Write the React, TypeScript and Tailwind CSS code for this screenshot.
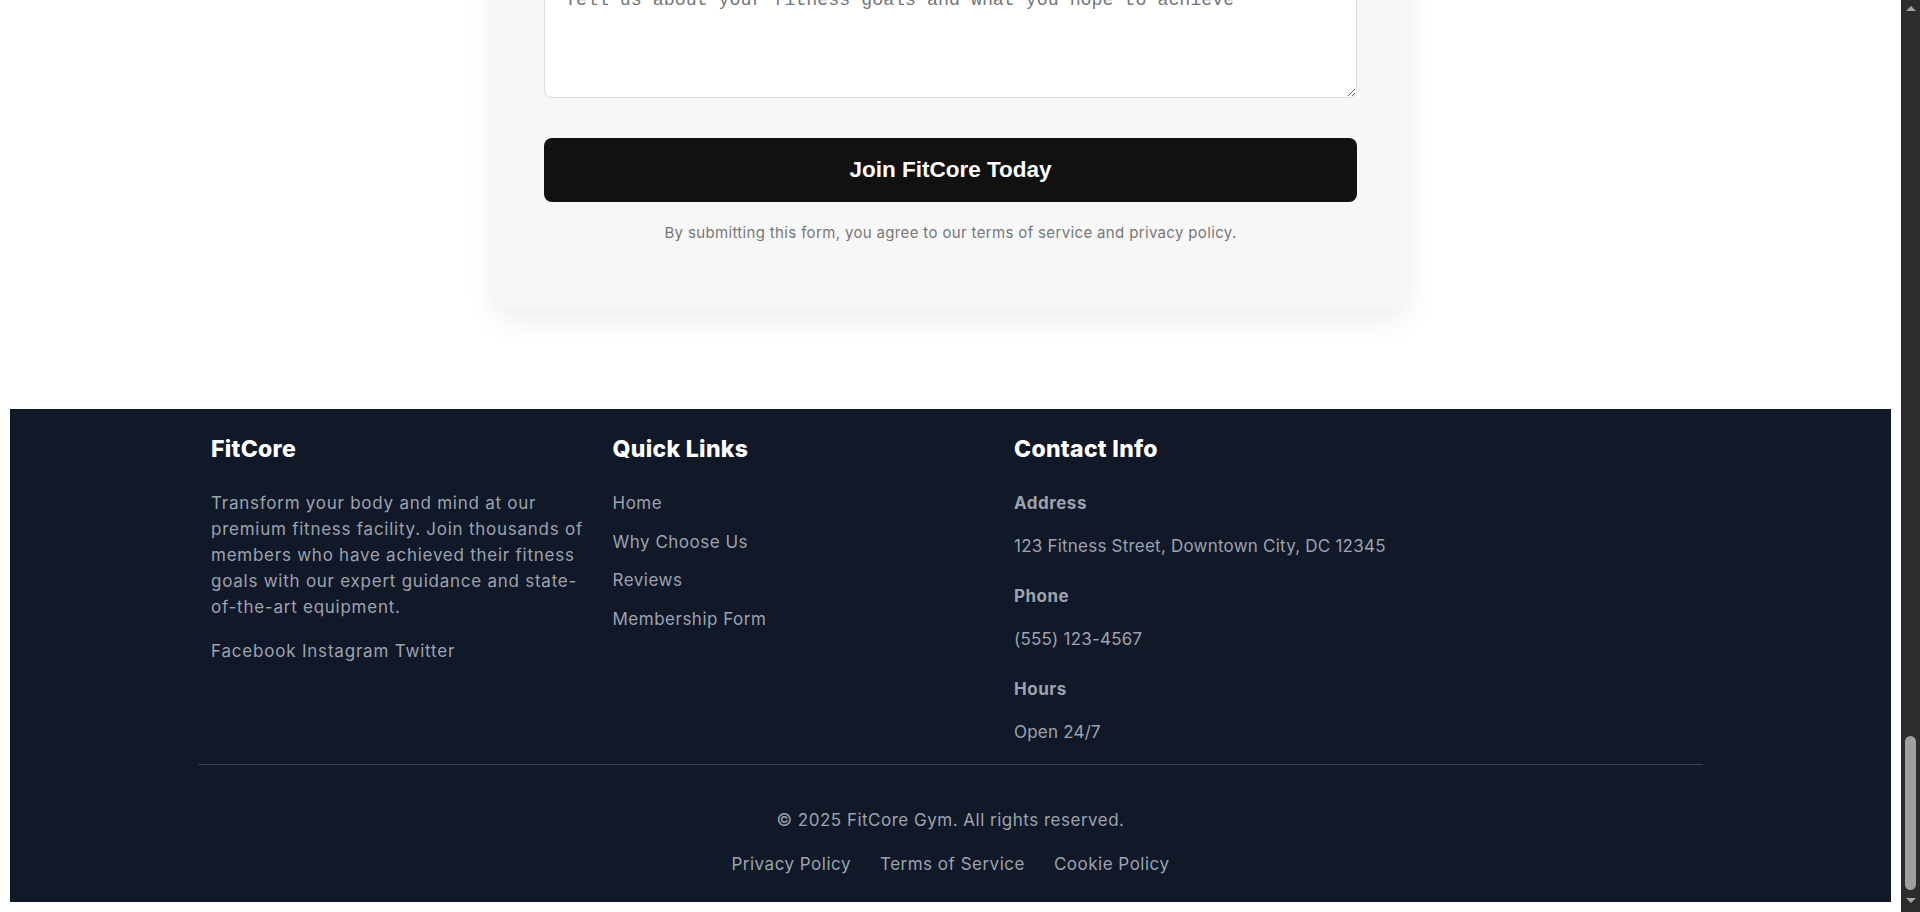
const QUICK_LINKS = ["Home", "Why Choose Us", "Reviews", "Membership Form"];

const CONTACT = [
  ["Address", "123 Fitness Street, Downtown City, DC 12345"],
  ["Phone", "(555) 123-4567"],
  ["Hours", "Open 24/7"],
];

function Scrollbar() {
  return (
    <div className="flex w-[19px] shrink-0 flex-col items-center bg-[#2c2c2c]">
      <div className="mt-[6px] h-0 w-0 border-x-[5px] border-b-[5px] border-x-transparent border-b-[#a3a3a3]" />
      <div className="mt-auto h-[154px] w-[11px] rounded-full bg-[#9f9f9f]" />
      <div className="mb-[9px] mt-[8px] h-0 w-0 border-x-[5px] border-t-[5px] border-x-transparent border-t-[#a3a3a3]" />
    </div>
  );
}

export default function App() {
  return (
    <div className="flex h-[912px] w-full overflow-hidden bg-white font-['Inter',sans-serif]">
      <div className="flex min-w-0 flex-1 flex-col">
        {/* Membership form, scrolled past its top */}
        <section className="flex justify-center">
          <div className="-mt-[80px] w-[913px] rounded-2xl bg-[#f7f7f7] px-[50px] pb-[66px] pt-[50px] shadow-[0_10px_30px_rgba(0,0,0,0.08)]">
            <textarea
              readOnly
              placeholder="Tell us about your fitness goals and what you hope to achieve"
              className="block h-[128px] w-full rounded-lg border border-[#dcdcdc] bg-white px-5 py-4 font-['Liberation_Mono',monospace] text-[18.3px] leading-[27px] placeholder:text-[#757575]"
            />
            <button className="mt-[40px] block h-[64px] w-full rounded-lg bg-[#111111] font-['Liberation_Sans',Arial,sans-serif] text-[22.5px] font-bold text-white">
              Join FitCore Today
            </button>
            <p className="mt-[21px] text-center text-[15px] leading-[20px] tracking-[0.35px] text-[#777777]">
              By submitting this form, you agree to our terms of service and privacy policy.
            </p>
          </div>
        </section>

        <footer className="mx-[10px] mt-[100px] bg-[#111827] pb-[26px] pt-[26px] text-[17px] tracking-[0.5px] text-[#9ca3af]">
          <div className="mx-auto w-[1505px]">
            <div className="grid grid-cols-[370px_370px_1fr] gap-x-[31.5px] px-[13px]">
              <div>
                <h3 className="text-[23px] font-extrabold leading-[28px] tracking-[0.3px] text-white">FitCore</h3>
                <p className="mt-[27px] whitespace-nowrap leading-[26px] tracking-[0.75px]">
                  Transform your body and mind at our
                  <br />
                  premium fitness facility. Join thousands of
                  <br />
                  members who have achieved their fitness
                  <br />
                  goals with our expert guidance and state-
                  <br />
                  of-the-art equipment.
                </p>
                <div className="mt-[18px] leading-[26px] tracking-[0.8px]">Facebook Instagram Twitter</div>
              </div>

              <div>
                <h3 className="text-[23px] font-extrabold leading-[28px] tracking-[0.3px] text-white">Quick Links</h3>
                <ul className="mt-[28px] flex flex-col gap-[14.7px]">
                  {QUICK_LINKS.map((l) => (
                    <li key={l} className="leading-[24px]">
                      {l}
                    </li>
                  ))}
                </ul>
              </div>

              <div>
                <h3 className="text-[23px] font-extrabold leading-[28px] tracking-[0.3px] text-white">Contact Info</h3>
                <div className="mt-[28px] flex flex-col gap-[26px]">
                  {CONTACT.map(([label, value]) => (
                    <div key={label}>
                      <p className="mb-[19px] font-bold leading-[24px]">{label}</p>
                      <p className="leading-[24px] tracking-[0.22px]">{value}</p>
                    </div>
                  ))}
                </div>
              </div>
            </div>

            <div className="mt-[20px] border-t border-[#3a3f47]" />

            <p className="mt-[43px] text-center leading-[24px]">© 2025 FitCore Gym. All rights reserved.</p>
            <div className="mt-[20px] flex justify-center gap-[29px] leading-[24px]">
              <span>Privacy Policy</span>
              <span>Terms of Service</span>
              <span>Cookie Policy</span>
            </div>
          </div>
        </footer>
      </div>
      <Scrollbar />
    </div>
  );
}
